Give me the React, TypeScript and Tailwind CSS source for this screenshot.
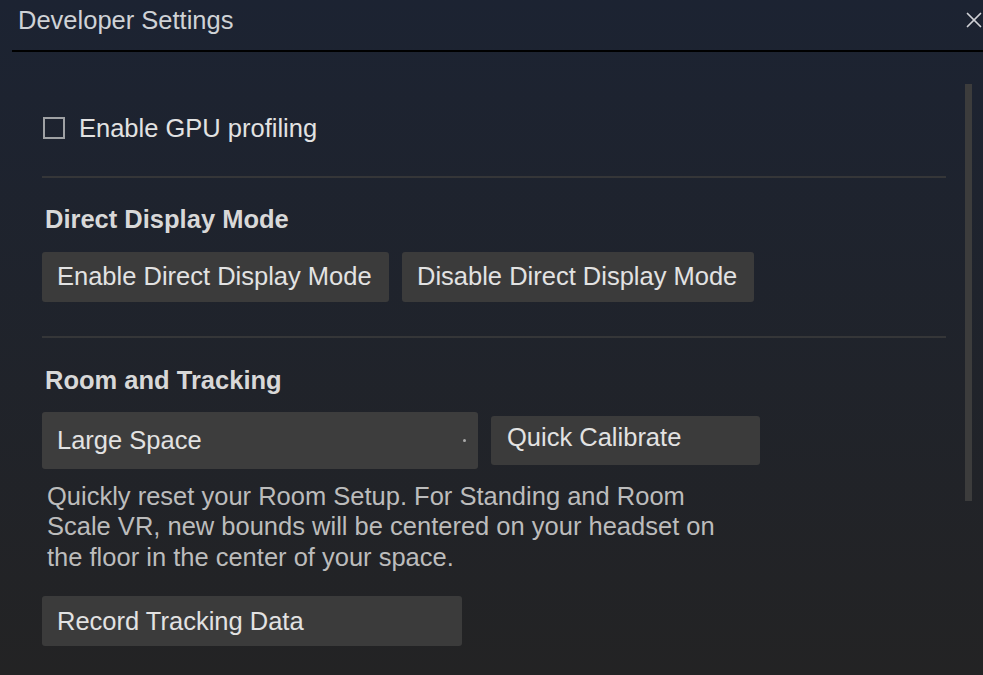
import { X } from "lucide-react";

function Divider() {
  return <div className="h-[2px] bg-[#353638] mr-[19px]" />;
}

function Btn({ children, className = "" }: { children: React.ReactNode; className?: string }) {
  return (
    <button className={`h-[50px] rounded-[3px] bg-[#3b3b3b] px-[15px] text-left text-[25.5px] text-[#e2e2e2] ${className}`}>
      {children}
    </button>
  );
}

export default function App() {
  return (
    <div
      className="h-[675px] w-[983px] overflow-hidden bg-gradient-to-b from-[#1c2332] to-[#232324] text-[#dcdcdc]"
      style={{ fontFamily: '"Liberation Sans", Arial, sans-serif' }}
    >
      {/* header */}
      <div className="flex h-[40px] items-center justify-between pl-[18px]">
        <span className="text-[25.5px] text-[#cfd2d6]">Developer Settings</span>
        <X className="-mr-[4px] h-[26px] w-[26px] text-[#d0d2d6]" strokeWidth={1.6} />
      </div>
      <div className="ml-[12px] mt-[10px] h-[2px] bg-black" />

      <div className="flex">
        <div className="flex-1 pl-[42px] pt-[57px]">
          <label className="flex items-center gap-[14px] pl-[1px]">
            <span className="h-[22px] w-[22px] border-[2px] border-[#9fa1a4]" />
            <span className="text-[25.5px] text-[#e2e2e2]">Enable GPU profiling</span>
          </label>

          <div className="mt-[29px]">
            <Divider />
          </div>

          <h2 className="mt-[22px] pl-[3px] text-[25.5px] font-bold text-[#d8d8d8]">Direct Display Mode</h2>
          <div className="mt-[13px] flex gap-[13px]">
            <Btn className="w-[347px]">Enable Direct Display Mode</Btn>
            <Btn className="w-[352px]">Disable Direct Display Mode</Btn>
          </div>

          <div className="mt-[34px]">
            <Divider />
          </div>

          <h2 className="mt-[23px] pl-[3px] text-[25.5px] font-bold text-[#d8d8d8]">Room and Tracking</h2>
          <div className="mt-[13px] flex items-center gap-[13px]">
            <div className="relative flex h-[57px] w-[436px] items-center rounded-[3px] bg-[#3d3d3d] px-[15px] text-[25.5px] text-[#e2e2e2]">
              Large Space
              <span className="absolute right-[12px] top-[27px] h-[3px] w-[3px] rounded-full bg-[#aaaaaa]" />
            </div>
            <button className="h-[49px] w-[269px] rounded-[3px] bg-[#3b3b3b] px-[16px] pb-[6px] text-left text-[25.5px] text-[#e2e2e2]">
              Quick Calibrate
            </button>
          </div>
          <p className="mt-[12px] w-[700px] pl-[5px] text-[25.5px] leading-[30.5px] text-[#bcbcbc]">
            Quickly reset your Room Setup. For Standing and Room Scale VR, new bounds will be centered on your headset on
            the floor in the center of your space.
          </p>
          <Btn className="mt-[24px] h-[49px] w-[420px]">Record Tracking Data</Btn>
        </div>
        <div className="w-[18px] pt-[32px]">
          <div className="h-[417px] w-[7px] bg-[#3c3c3c]" />
        </div>
      </div>
    </div>
  );
}
